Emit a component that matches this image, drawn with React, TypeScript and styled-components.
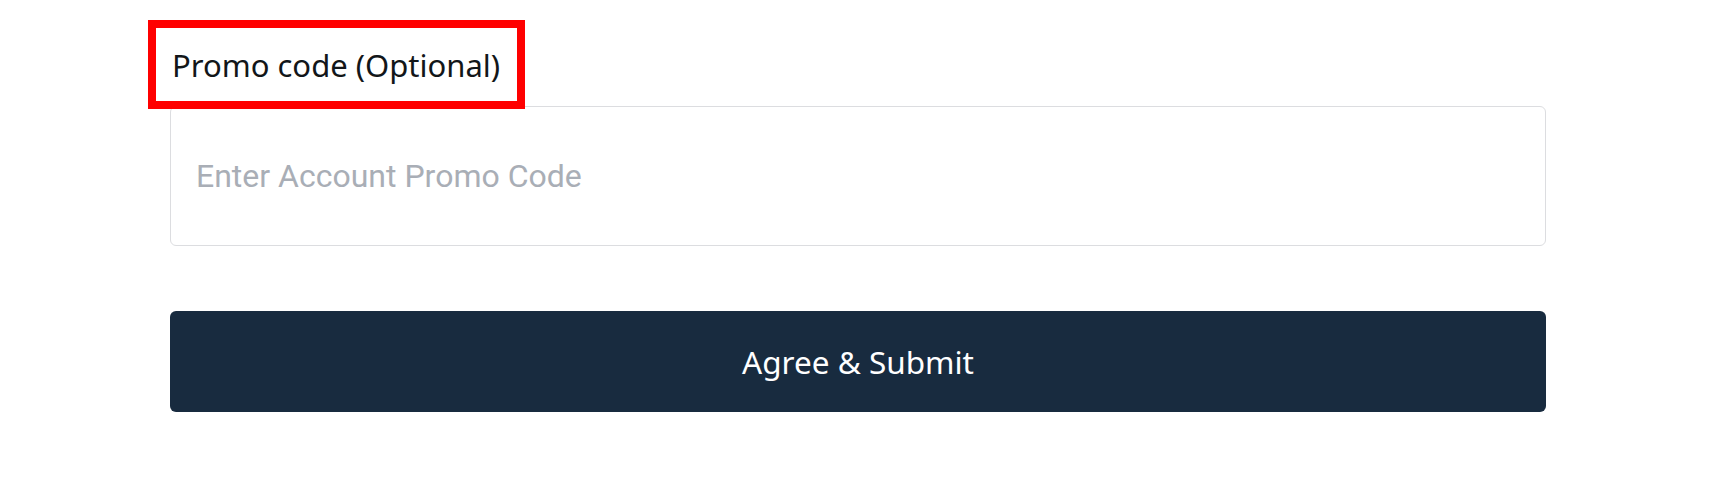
import React from "react";
import styled, { createGlobalStyle } from "styled-components";

const GlobalStyle = createGlobalStyle`
  html, body {
    margin: 0;
    padding: 0;
    background: #ffffff;
  }
  body {
    font-family: "Noto Sans", "Open Sans", sans-serif;
  }
`;

const Page = styled.div`
  width: 1714px;
  height: 489px;
  background: #ffffff;
  padding: 20px 0 0 170px;
  box-sizing: border-box;
`;

const Form = styled.form`
  width: 1376px;
  display: flex;
  flex-direction: column;
  align-items: stretch;
`;

const LabelRow = styled.div`
  display: flex;
  margin-left: -22px;
  margin-bottom: -3px;
  position: relative;
  z-index: 1;
`;

const Label = styled.label`
  display: flex;
  align-items: center;
  height: 73px;
  padding: 0 17px 0 16px;
  border: 8px solid #ff0000;
  font-family: "Noto Sans", sans-serif;
  font-size: 31px;
  color: #121619;
  white-space: nowrap;
`;

const Input = styled.input`
  display: block;
  box-sizing: border-box;
  width: 100%;
  height: 140px;
  margin: 0;
  padding: 0 25px;
  border: 1px solid #dcdde0;
  border-radius: 6px;
  background: #ffffff;
  font-family: Roboto, "Liberation Sans", sans-serif;
  font-size: 32px;
  color: #1b2533;
  outline: none;

  &::placeholder {
    color: #a9aeb6;
  }
`;

const Submit = styled.button`
  display: flex;
  align-items: center;
  justify-content: center;
  width: 100%;
  height: 101px;
  margin-top: 65px;
  border: none;
  border-radius: 6px;
  background: #182b3f;
  color: #ffffff;
  font-family: "Noto Sans", sans-serif;
  font-size: 31.5px;
  cursor: pointer;
`;

export default function App() {
  return (
    <>
      <GlobalStyle />
      <Page>
        <Form onSubmit={(e) => e.preventDefault()}>
          <LabelRow>
            <Label htmlFor="promo">Promo code (Optional)</Label>
          </LabelRow>
          <Input id="promo" type="text" placeholder="Enter Account Promo Code" />
          <Submit type="submit">Agree &amp; Submit</Submit>
        </Form>
      </Page>
    </>
  );
}
